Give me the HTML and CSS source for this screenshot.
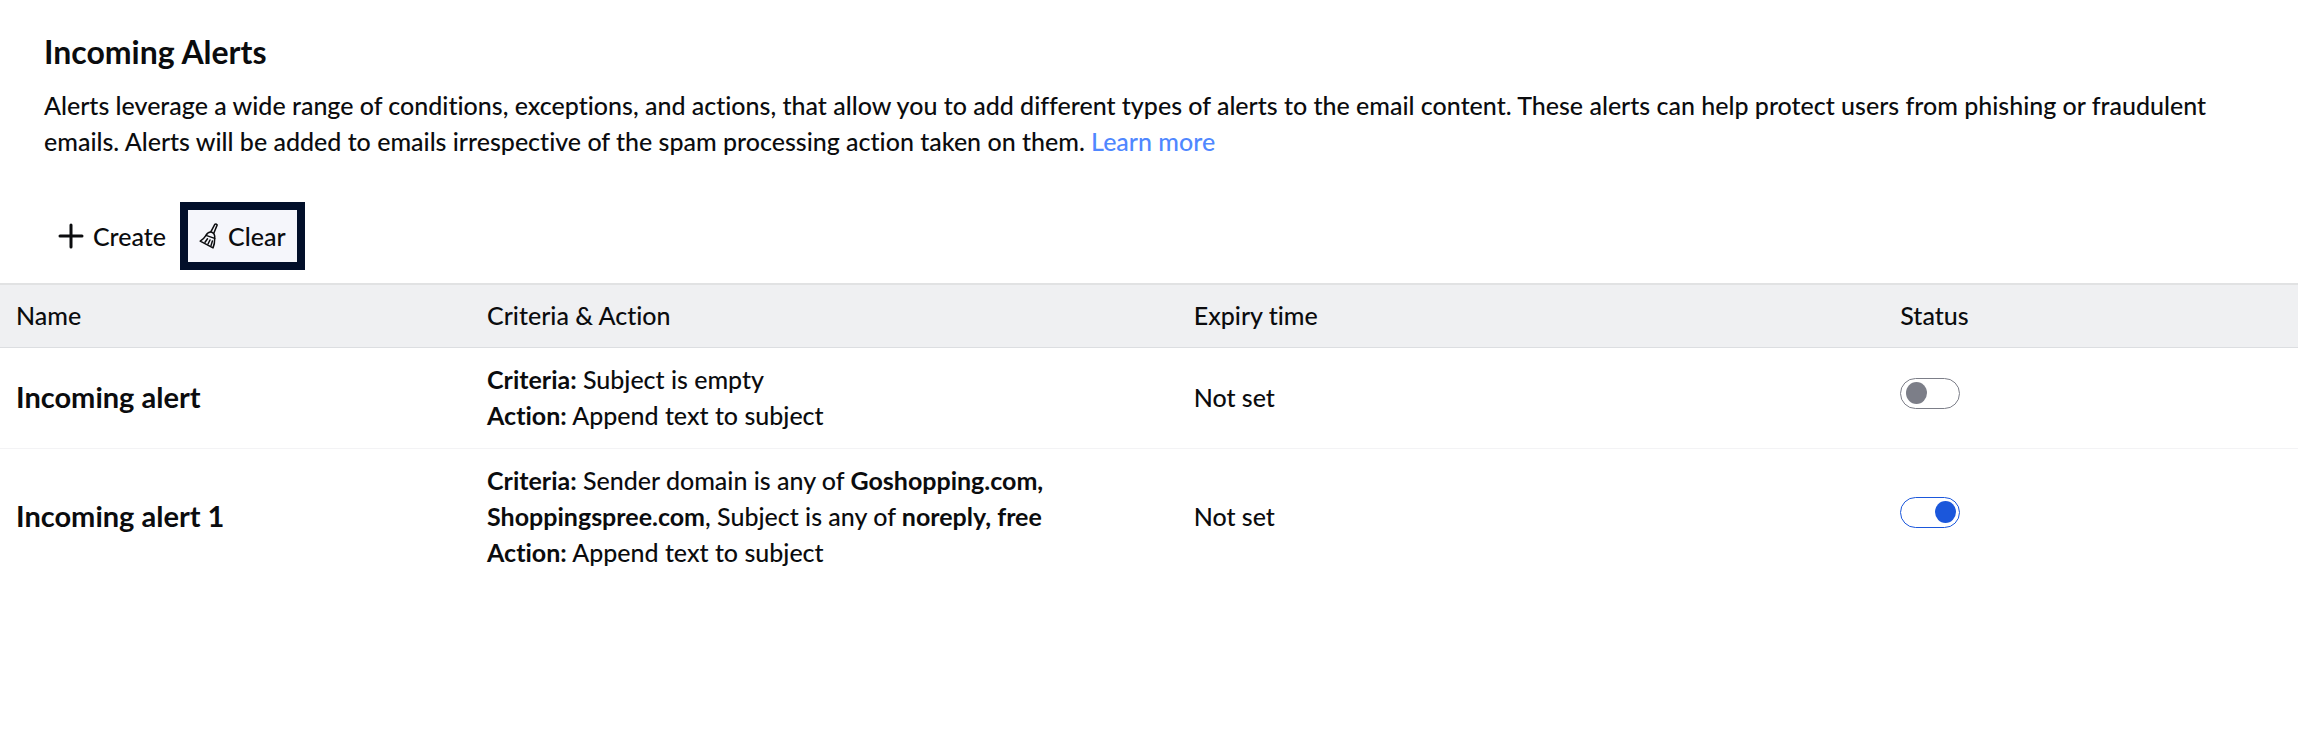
FILE: index.html
```html
<!DOCTYPE html>
<html lang="en">
<head>
    <meta charset="utf-8" />
    <title>Incoming Alerts</title>
    <link rel="stylesheet" href="styles.css">
</head>
<body>
    <header class="intro">
        <h2>Incoming Alerts</h2>
        <p>
            Alerts leverage a wide range of conditions, exceptions, and actions, that allow you to add different types of alerts to the email content. These alerts can help protect users from phishing or fraudulent emails. Alerts will be added to emails irrespective of the spam processing action taken on them.
            <a href="#">Learn more</a>
        </p>
    </header>

    <div class="toolbar">
        <button type="button" class="tool">
            <svg class="plus" viewBox="0 0 26 26" aria-hidden="true">
                <path d="M13 2v22M2 13h22" />
            </svg>
            Create
        </button>
        <button type="button" class="tool highlighted">
            <svg class="broom" viewBox="0 0 20 26" aria-hidden="true">
                <!-- handle -->
                <path d="M11.8 8.8L15.8 1.4Q17 .4 18.2 1.9L14.8 10.2" />
                <!-- collar and brush -->
                <path d="M7 12.4Q9.2 8.4 12.8 9.2Q16.2 10.4 15.7 15.4Z" />
                <path d="M7 12.4Q4.8 16 1.2 18.2L14 24.9Q15.8 20.4 15.7 15.4" />
                <path d="M8.5 15.8L6 19.2M11 17L9 21M13.4 18L12 22.6" />
            </svg>
            Clear
        </button>
    </div>

    <table class="alerts">
        <thead>
            <tr>
                <th class="col-name">Name</th>
                <th class="col-wide">Criteria &amp; Action</th>
                <th class="col-wide">Expiry time</th>
                <th>Status</th>
            </tr>
        </thead>
        <tbody>
            <tr>
                <td class="name">Incoming alert</td>
                <td>
                    <div><b>Criteria:</b> Subject is empty</div>
                    <div><b>Action:</b> Append text to subject</div>
                </td>
                <td>Not set</td>
                <td><input type="checkbox" class="switch" aria-label="Incoming alert status"></td>
            </tr>
            <tr>
                <td class="name">Incoming alert 1</td>
                <td>
                    <div class="criteria"><b>Criteria:</b> Sender domain is any of <b>Goshopping.com, Shoppingspree.com</b>, Subject is any of <b>noreply, free</b></div>
                    <div><b>Action:</b> Append text to subject</div>
                </td>
                <td>Not set</td>
                <td><input type="checkbox" class="switch" aria-label="Incoming alert 1 status" checked></td>
            </tr>
        </tbody>
    </table>
</body>
</html>
```
FILE: styles.css
```css
body {
    margin: 0;
    background: #fff;
    color: #0b0c0e;
    font: 500 25px/36px Lato, sans-serif;
    font-variant-ligatures: none;
}

.intro {
    padding: 32px 44px 0;
}

h2 {
    margin: 0;
    font-size: 32px;
    line-height: 40px;
}

p {
    margin: 15px 0 0;
}

a {
    color: #4f87ff;
    text-decoration: none;
}

.toolbar {
    display: flex;
    align-items: center;
    padding: 43px 44px 13px;
}

.tool {
    display: flex;
    align-items: center;
    gap: 9px;
    height: 68px;
    padding: 0 14px;
    border: 0;
    background: none;
    color: inherit;
    font: inherit;
}

/* dark frame round the selected action */
.highlighted {
    padding: 0 11px;
    border: 8px solid #020f2a;
    background: #f5f6fb;
}

.tool svg {
    height: 26px;
    fill: none;
    stroke: currentColor;
    stroke-linecap: round;
    stroke-linejoin: round;
}

.plus {
    width: 26px;
    stroke-width: 3;
}

.broom {
    width: 20px;
    stroke-width: 1.5;
}

.alerts {
    width: 100%;
    table-layout: fixed;
    border-spacing: 0;
}

th,
td {
    box-sizing: border-box;
    padding: 13px 16px 15px;
    text-align: left;
}

th {
    padding: 12px 16px 14px;
    border-top: 2px solid #e1e2e3;
    border-bottom: 1px solid #dcdee1;
    background: #eff0f2;
    font-weight: 500;
}

td {
    border-bottom: 1px solid #f3f3f5;
}

tr:last-child td {
    border-bottom: 0;
}

.col-name {
    width: 20.5%;
}

.col-wide {
    width: 30.75%;
}

.name {
    font-size: 29px;
    font-weight: bold;
}

.criteria {
    max-width: 600px;
}

/* on/off switch */
.switch {
    appearance: none;
    display: flex;
    align-items: center;
    box-sizing: border-box;
    width: 60px;
    height: 31px;
    margin: 0 0 8px;
    padding: 0 5px;
    border: 1px solid #7c7e88;
    border-radius: 16px;
    color: #7c7e88;
}

.switch::before {
    content: "";
    width: 21px;
    height: 22px;
    border-radius: 50%;
    background: currentColor;
}

.switch:checked {
    justify-content: flex-end;
    padding: 0 3px;
    border-color: #1b57db;
    color: #1b57db;
}
```
